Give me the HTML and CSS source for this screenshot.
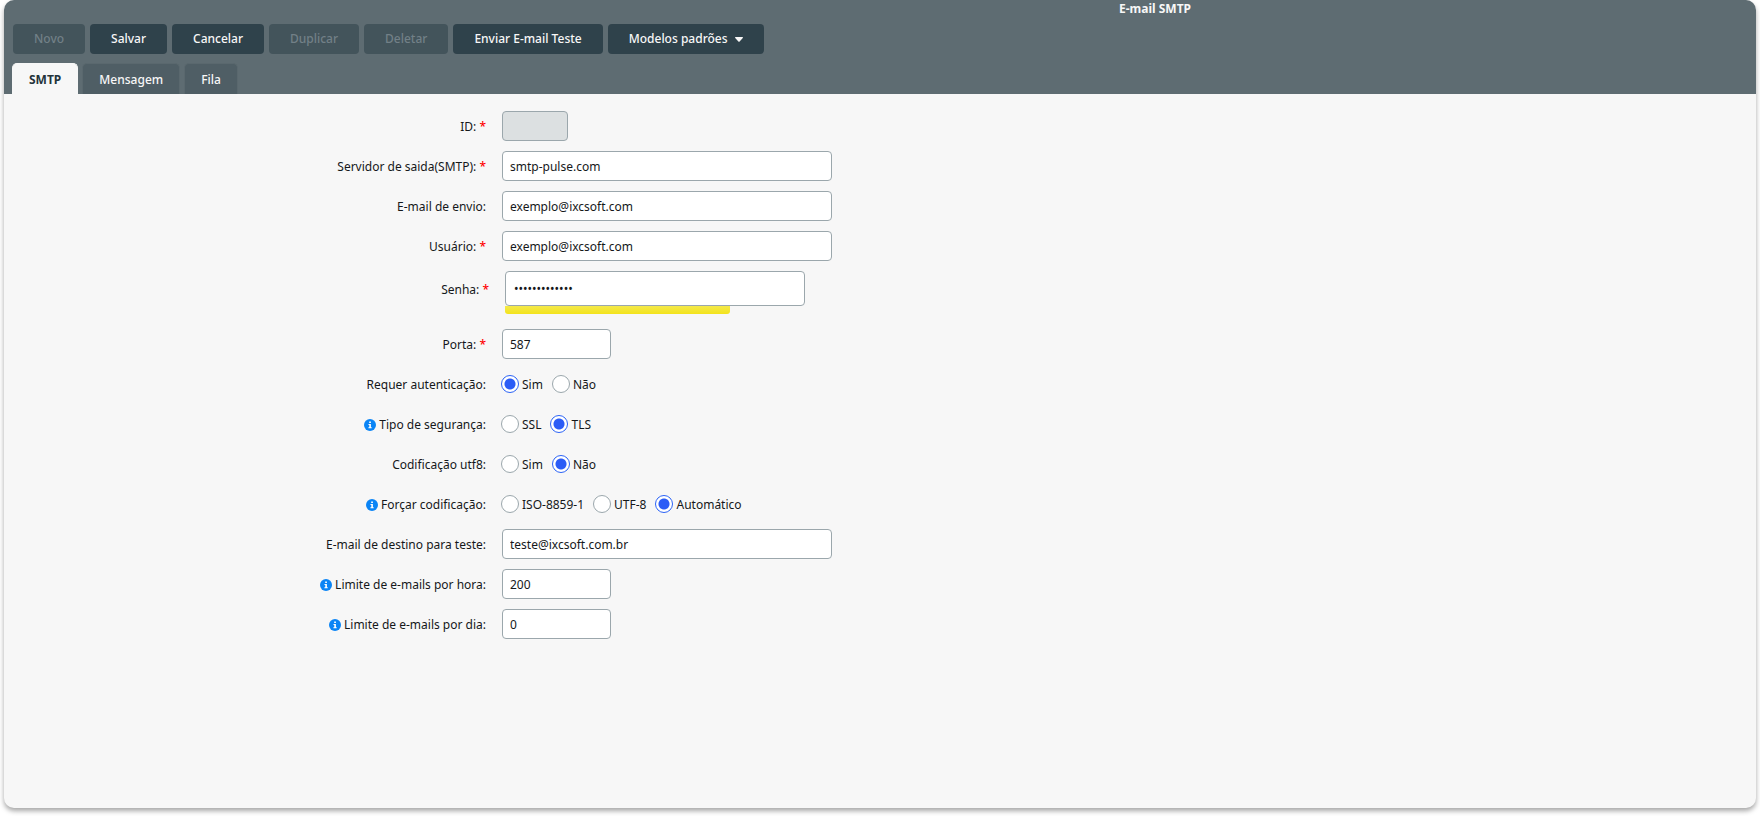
FILE: index.html
```html
<!DOCTYPE html>
<html lang="pt-BR">
<head>
<meta charset="utf-8">
<title>E-mail SMTP</title>
<link rel="stylesheet" href="styles.css">
</head>
<body>
<svg class="sprite" aria-hidden="true">
  <symbol id="info" viewBox="0 0 12 12">
    <circle cx="6" cy="6" r="6" fill="#0a84f5"/>
    <path d="M5.2 2.4h1.7v1.6H5.2zM4.5 4.9h2.4v3.3h.8v1H4.4v-1h.9V5.9h-.8z" fill="#fff"/>
  </symbol>
</svg>
<main class="window">
  <header class="header">
    <h1 class="title">E-mail SMTP</h1>
    <div class="toolbar">
      <button class="button" type="button" disabled>Novo</button>
      <button class="button" type="button">Salvar</button>
      <button class="button" type="button">Cancelar</button>
      <button class="button" type="button" disabled>Duplicar</button>
      <button class="button" type="button" disabled>Deletar</button>
      <button class="button" type="button">Enviar E-mail Teste</button>
      <button class="button" type="button">Modelos padrões <svg class="caret" viewBox="0 0 8 5" aria-hidden="true"><path d="M.6 0h6.8c.5 0 .8.6.4 1L4.4 4.7c-.2.2-.6.2-.8 0L.2 1C-.2.6.1 0 .6 0z" fill="currentColor"/></svg></button>
    </div>
    <nav class="tabs">
      <button class="tab active" type="button">SMTP</button>
      <button class="tab" type="button">Mensagem</button>
      <button class="tab" type="button">Fila</button>
    </nav>
  </header>
  <form class="form">
    <div class="row">
      <label class="label" for="id">ID: <span class="required">*</span></label>
      <input class="field tiny" id="id" type="text" disabled>
    </div>
    <div class="row">
      <label class="label" for="server">Servidor de saida(SMTP): <span class="required">*</span></label>
      <input class="field" id="server" type="text" value="smtp-pulse.com">
    </div>
    <div class="row">
      <label class="label" for="sender">E-mail de envio:</label>
      <input class="field" id="sender" type="text" value="exemplo@ixcsoft.com">
    </div>
    <div class="row">
      <label class="label" for="user">Usuário: <span class="required">*</span></label>
      <input class="field" id="user" type="text" value="exemplo@ixcsoft.com">
    </div>
    <div class="row row-password">
      <label class="label" for="password">Senha: <span class="required">*</span></label>
      <div class="password">
        <input class="field password-field" id="password" type="password" value="senha12345678">
        <div class="strength"></div>
      </div>
    </div>
    <div class="row">
      <label class="label" for="port">Porta: <span class="required">*</span></label>
      <input class="field small" id="port" type="text" value="587">
    </div>
    <div class="row" role="radiogroup" aria-labelledby="auth">
      <span class="label" id="auth">Requer autenticação:</span>
      <div class="options">
        <label class="option"><input class="radio" type="radio" name="auth" checked><span class="option-text">Sim</span></label>
        <label class="option"><input class="radio" type="radio" name="auth"><span class="option-text">Não</span></label>
      </div>
    </div>
    <div class="row" role="radiogroup" aria-labelledby="security">
      <span class="label" id="security"><svg class="info"><use href="#info"/></svg>Tipo de segurança:</span>
      <div class="options">
        <label class="option"><input class="radio" type="radio" name="security"><span class="option-text">SSL</span></label>
        <label class="option"><input class="radio" type="radio" name="security" checked><span class="option-text">TLS</span></label>
      </div>
    </div>
    <div class="row" role="radiogroup" aria-labelledby="utf8">
      <span class="label" id="utf8">Codificação utf8:</span>
      <div class="options">
        <label class="option"><input class="radio" type="radio" name="utf8"><span class="option-text">Sim</span></label>
        <label class="option"><input class="radio" type="radio" name="utf8" checked><span class="option-text">Não</span></label>
      </div>
    </div>
    <div class="row" role="radiogroup" aria-labelledby="force">
      <span class="label" id="force"><svg class="info"><use href="#info"/></svg>Forçar codificação:</span>
      <div class="options">
        <label class="option"><input class="radio" type="radio" name="force"><span class="option-text">ISO-8859-1</span></label>
        <label class="option"><input class="radio" type="radio" name="force"><span class="option-text">UTF-8</span></label>
        <label class="option"><input class="radio" type="radio" name="force" checked><span class="option-text">Automático</span></label>
      </div>
    </div>
    <div class="row">
      <label class="label" for="test">E-mail de destino para teste:</label>
      <input class="field" id="test" type="text" value="teste@ixcsoft.com.br">
    </div>
    <div class="row">
      <label class="label" for="hour"><svg class="info"><use href="#info"/></svg>Limite de e-mails por hora:</label>
      <input class="field small" id="hour" type="text" value="200">
    </div>
    <div class="row">
      <label class="label" for="day"><svg class="info"><use href="#info"/></svg>Limite de e-mails por dia:</label>
      <input class="field small" id="day" type="text" value="0">
    </div>
  </form>
</main>
</body>
</html>
```
FILE: styles.css
```css
* { box-sizing: border-box; }
body {
  margin: 0;
  padding: 0 4px 8px;
  min-height: 100vh;
  display: flex;
  background: #fff;
  color: #15181a;
  font: 12px/16px "Noto Sans", sans-serif;
}
button, input { font: inherit; color: inherit; margin: 0; }
.sprite { position: absolute; width: 0; height: 0; }
.window {
  flex: 1;
  background: #f7f7f7;
  border-radius: 10px;
  overflow: hidden;
  box-shadow: 0 3px 5px rgba(0, 0, 0, .35);
}
.header { background: #5e6c72; }
.title {
  margin: 0;
  padding-left: 550px;
  font-size: 12px;
  line-height: 18px;
  font-weight: 700;
  text-align: center;
  color: #f7f7f7;
}
.toolbar { display: flex; gap: 5px; padding: 6px 9px 9px; }
.button {
  height: 30px;
  padding: 0 21px;
  border: 0;
  border-radius: 4px;
  background: #2f424b;
  color: #f7f7f7;
  font-weight: 500;
}
.button:disabled { background: #43545b; color: #728087; }
.caret { width: 8px; height: 5px; margin-left: 4px; vertical-align: 1px; }
.tabs { display: flex; gap: 4px; padding: 0 8px; }
.tab {
  height: 31px;
  padding: 2px 16px 0;
  border: 1px solid #5a686e;
  border-width: 1px 1px 0;
  border-radius: 5px 5px 0 0;
  background: #4f5e65;
  color: #f7f7f7;
  font-weight: 500;
}
.tab.active { background: #f7f7f7; border-color: #f7f7f7; color: #24343b; font-weight: 700; }
.form { display: flex; flex-direction: column; gap: 10px; padding: 17px 0; }
.row { display: flex; align-items: center; gap: 16px; min-height: 30px; }
.label { flex: 0 0 482px; text-align: right; padding-top: 1px; }
.required { color: #f00; font-weight: 500; }
.field {
  width: 330px;
  height: 30px;
  padding: 0 7px;
  border: 1px solid #9ba7ac;
  border-radius: 4px;
  background: #fff;
}
.tiny { width: 66px; }
.small { width: 109px; }
.field:disabled { background: #dce0e1; }
.row-password { align-items: flex-start; padding: 0 0 5px 3px; }
.row-password .label { line-height: 35px; }
.password { width: 300px; }
.password-field { display: block; width: 100%; height: 35px; padding: 0 8px; }
.strength { width: 75%; height: 8px; border-radius: 0 0 3px 3px; background: linear-gradient(#f4e94a, #f3e31c); }
.options { display: flex; gap: 9px; margin-left: -1px; }
.option { display: flex; align-items: center; gap: 3px; }
.option-text { padding-top: 2px; }
.radio {
  appearance: none;
  width: 18px;
  height: 18px;
  border: 1px solid #9ba7ac;
  border-radius: 50%;
  background: #fff;
}
.radio:checked { border-color: #2b63f6; background: radial-gradient(circle, #2b5cf6 5px, #fff 6px); }
.info { width: 12px; height: 12px; margin-right: 3px; vertical-align: -2px; }
```
